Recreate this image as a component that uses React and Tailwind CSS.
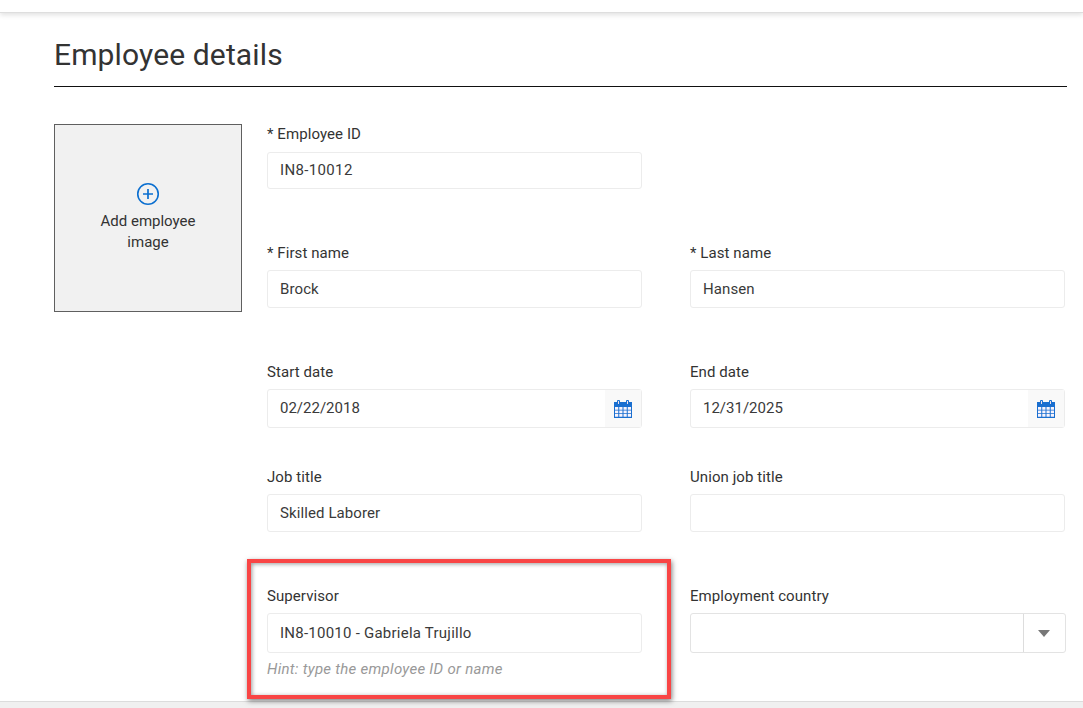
const labelCls = 'block text-[15px] leading-5 tracking-[0.08px] text-[#333]';
const inputCls = 'flex items-center w-full bg-white border border-[#ececec] rounded-[3px] px-3 text-[15px] text-[#3a3a3a]';

function CalendarIcon() {
  return (
    <svg width="20" height="20" viewBox="0 0 20 20">
      <rect x="1" y="3" width="18" height="16" fill="#1a6fd0" />
      <rect x="4" y="1" width="3" height="5" rx="1" fill="#1a6fd0" />
      <rect x="13" y="1" width="3" height="5" rx="1" fill="#1a6fd0" />
      <rect x="5" y="2" width="1" height="3" fill="#f0dfe8" />
      <rect x="14" y="2" width="1" height="3" fill="#f0dfe8" />
      <g fill="#f8f4fc">
        <rect x="2" y="8" width="3.25" height="2.75" />
        <rect x="6.25" y="8" width="3.25" height="2.75" />
        <rect x="10.5" y="8" width="3.25" height="2.75" />
        <rect x="14.75" y="8" width="3.25" height="2.75" />
        <rect x="2" y="11.5" width="3.25" height="2.75" />
        <rect x="6.25" y="11.5" width="3.25" height="2.75" />
        <rect x="10.5" y="11.5" width="3.25" height="2.75" />
        <rect x="14.75" y="11.5" width="3.25" height="2.75" />
        <rect x="2" y="15" width="3.25" height="2.75" />
        <rect x="6.25" y="15" width="3.25" height="2.75" />
        <rect x="10.5" y="15" width="3.25" height="2.75" />
        <rect x="14.75" y="15" width="3.25" height="2.75" />
      </g>
    </svg>
  );
}

function Field({ label, value, h = 'h-[38px]', mt = 'mt-[7px]', tracking = 'tracking-[0.1px]' }) {
  return (
    <div>
      <label className={labelCls}>{label}</label>
      <div className={`${inputCls} ${h} ${mt} ${tracking}`}>{value}</div>
    </div>
  );
}

function DateField({ label, value }) {
  return (
    <div>
      <label className={labelCls}>{label}</label>
      <div className="flex items-stretch w-full h-[39px] mt-[7px] bg-white border border-[#ececec] rounded-[3px] text-[15px] text-[#3a3a3a]">
        <div className="flex items-center flex-1 px-3">{value}</div>
        <div className="flex items-center justify-center w-[36px] bg-[#f9f9f9]">
          <CalendarIcon />
        </div>
      </div>
    </div>
  );
}

function SelectField({ label }) {
  return (
    <div>
      <label className={labelCls}>{label}</label>
      <div className="flex items-stretch w-[376px] h-[40px] mt-[7px] bg-white border border-[#e3e3e3] rounded-[3px]">
        <div className="flex-1" />
        <div className="flex items-center justify-center w-[42px] pr-[1px] border-l border-[#dddddd]">
          <span className="w-0 h-0 mt-[1px] border-l-[6.5px] border-r-[6.5px] border-t-[7px] border-l-transparent border-r-transparent border-t-[#777]" />
        </div>
      </div>
    </div>
  );
}

export default function App() {
  return (
    <div className="relative h-[708px] w-[1083px] overflow-hidden bg-white font-['Roboto',sans-serif]">
      <div className="h-[13px] bg-white border-b border-[#dedede] shadow-[0_2px_5px_rgba(0,0,0,0.12)]" />

      <main className="h-[688px] pl-[54px] pr-[16px]">
        <h1 className="pt-[23px] text-[30px] leading-[38px] tracking-[0.13px] font-normal text-[#333]">Employee details</h1>
        <div className="mt-[12px] border-b border-[#111]" />

        <div className="flex mt-[37px]">
          <div className="flex flex-col items-center justify-center w-[188px] h-[188px] pb-[1px] bg-[#f1f1f1] border border-[#5f5f5f]">
            <svg width="24" height="24" viewBox="0 0 24 24" fill="none" stroke="#0b6fd0" className="mb-[5px]">
              <circle cx="12" cy="12" r="10.25" strokeWidth="1.6" />
              <path d="M12 7v10M7 12h10" strokeWidth="1.7" />
            </svg>
            <div className="w-[110px] text-center text-[15px] leading-[21px] text-[#333]">Add employee image</div>
          </div>

          <div className="ml-[25px] grid grid-cols-[375px_375px] gap-x-[48px]">
            <Field label="* Employee ID" value="IN8-10012" h="h-[37px]" mt="mt-[8px]" tracking="tracking-[0.35px]" />
            <div />
            <div className="col-start-1 mt-[54px]"><Field label="* First name" value="Brock" /></div>
            <div className="mt-[54px]"><Field label="* Last name" value="Hansen" /></div>
            <div className="mt-[54px]"><DateField label="Start date" value="02/22/2018" /></div>
            <div className="mt-[54px]"><DateField label="End date" value="12/31/2025" /></div>
            <div className="mt-[39px]"><Field label="Job title" value="Skilled Laborer" /></div>
            <div className="mt-[39px]"><Field label="Union job title" value="" /></div>
            <div className="mt-[54px]">
              <Field label="Supervisor" value="IN8-10010 - Gabriela Trujillo" h="h-[40px]" tracking="tracking-[0.24px]" />
              <div className="mt-[6px] text-[15px] leading-5 italic tracking-[0.28px] text-[#999]">Hint: type the employee ID or name</div>
            </div>
            <div className="mt-[54px]"><SelectField label="Employment country" /></div>
          </div>
        </div>
      </main>

      <div className="h-[7px] bg-[#f0f0f0] border-t border-[#dcdcdc]" />

      {/* callout drawn over the screenshot */}
      <div className="absolute left-[247px] top-[559px] w-[424px] h-[140px] border-[4px] border-[#f94545] shadow-[1px_2px_5px_rgba(0,0,0,0.5),inset_1px_1px_4px_rgba(0,0,0,0.4)]" />
    </div>
  );
}
